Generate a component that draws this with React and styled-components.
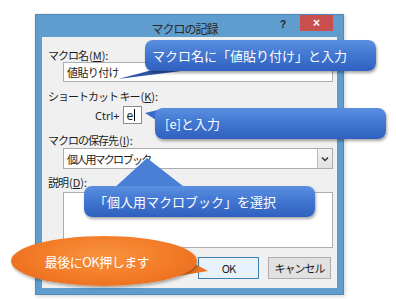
import React from "react";
import styled, { createGlobalStyle } from "styled-components";

const Global = createGlobalStyle`
  html, body { margin: 0; padding: 0; background: #ffffff; }
  body { font-family: "Noto Sans CJK JP", "Noto Sans", sans-serif; }
`;

const Page = styled.div`
  position: relative;
  width: 396px;
  height: 299px;
  box-sizing: border-box;
  padding: 14px 0 0 35px;
  overflow: hidden;
`;

const Dialog = styled.div`
  width: 309px;
  height: 281px;
  box-sizing: border-box;
  background: #5e9dcd;
  border: 1px solid #4f8ab8;
  padding: 0 6px 6px 6px;
  display: flex;
  flex-direction: column;
  box-shadow: 1px 1px 4px rgba(0, 0, 0, 0.2);
`;

const TitleBar = styled.div`
  height: 22px;
  margin: 0 -6px;
  padding-right: 10px;
  display: grid;
  grid-template-columns: 1fr auto 1fr;
  align-items: center;
`;

const Title = styled.div`
  grid-column: 2;
  font-size: 12px;
  letter-spacing: -1px;
  color: #2a2a2a;
  line-height: 22px;
  margin-top: 3px;
`;

const Controls = styled.div`
  grid-column: 3;
  justify-self: end;
  align-self: start;
  display: flex;
  align-items: flex-start;
`;

const Help = styled.div`
  font-family: "Liberation Sans", sans-serif;
  font-weight: bold;
  font-size: 10px;
  color: #222;
  margin: 4px 14px 0 0;
`;

const Close = styled.div`
  width: 33px;
  height: 16px;
  background: #c94f4f;
  color: #fff;
  font-family: "Liberation Sans", sans-serif;
  font-weight: bold;
  font-size: 12px;
  line-height: 16px;
  text-align: center;
`;

const Client = styled.div`
  flex: 1;
  background: #f0f0f0;
  padding: 11px 4px 0 6px;
  display: flex;
  flex-direction: column;
`;

const Label = styled.div`
  font-size: 11px;
  line-height: 14px;
  letter-spacing: -1px;
  color: #1c1c1c;
  margin-top: ${(p) => p.$mt || 0}px;
`;

const Acc = styled.span`
  letter-spacing: 0;
  margin-left: 1px;
  u { text-decoration: underline; }
`;

const Field = styled.div`
  margin: ${(p) => p.$mt || 0}px 0 0 15px;
  height: ${(p) => p.$h || 20}px;
  box-sizing: border-box;
  border: 1px solid #abadb3;
  background: #fff;
  display: flex;
  align-items: ${(p) => (p.$top ? "flex-start" : "center")};
  padding-left: 3px;
  font-size: 11px;
  letter-spacing: ${(p) => (p.$tight ? -1.8 : -0.6)}px;
  color: #1c1c1c;
`;

const FieldText = styled.span`
  flex: 1;
`;

const DropButton = styled.div`
  width: 15px;
  height: 19px;
  box-sizing: border-box;
  border-left: 1px solid #b8b8b8;
  background: linear-gradient(#f2f2f2, #e2e2e2);
  display: flex;
  align-items: center;
  justify-content: center;
`;

const CtrlRow = styled.div`
  margin-top: 3px;
  padding-left: 47px;
  display: flex;
  align-items: center;
  font-family: "Noto Sans", sans-serif;
  font-size: 11px;
  color: #1c1c1c;
`;

const KeyBox = styled.div`
  width: 19px;
  height: 18px;
  box-sizing: border-box;
  margin-left: 3px;
  border: 1px solid #8a8a8a;
  background: #fff;
  display: flex;
  align-items: center;
  padding-left: 3px;
  font-size: 12px;
`;

const Caret = styled.span`
  display: inline-block;
  width: 1px;
  height: 12px;
  background: #000;
  margin-left: 1px;
`;

const ButtonRow = styled.div`
  margin-top: 9px;
  padding-right: 2px;
  display: flex;
  justify-content: flex-end;
  gap: 9px;
`;

const Button = styled.div`
  width: ${(p) => p.$w}px;
  height: 22px;
  box-sizing: border-box;
  border: 1px solid ${(p) => (p.$primary ? "#3c7fb1" : "#adadad")};
  background: ${(p) => (p.$primary ? "#e5f1fb" : "#e1e1e1")};
  display: flex;
  align-items: center;
  justify-content: center;
  font-size: 11px;
  letter-spacing: -1px;
  color: #1c1c1c;
`;

const Tails = styled.svg`
  position: absolute;
  left: 0;
  top: 0;
  width: 396px;
  height: 299px;
  pointer-events: none;
`;

const Bubble = styled.div`
  position: absolute;
  left: ${(p) => p.$x}px;
  top: ${(p) => p.$y}px;
  width: ${(p) => p.$w}px;
  height: ${(p) => p.$h}px;
  box-sizing: border-box;
  padding-left: ${(p) => p.$pl}px;
  border-radius: 8px;
  background: linear-gradient(#5a8fe0 0%, #4378d2 45%, #2f60c0 100%);
  box-shadow: 1px 2px 3px rgba(0, 0, 0, 0.35);
  display: flex;
  align-items: center;
  color: #fff;
  font-size: 13px;
  white-space: nowrap;
`;

const Ellipse = styled.div`
  position: absolute;
  left: 11px;
  top: 236px;
  width: 186px;
  height: 50px;
  border-radius: 50%;
  background: radial-gradient(ellipse at 50% 40%, #f8923f 0%, #f27a26 55%, #e2661a 100%);
  box-shadow: 1px 2px 3px rgba(0, 0, 0, 0.3);
  display: flex;
  align-items: center;
  justify-content: center;
  padding-right: 14px;
  box-sizing: border-box;
  color: #fff;
  font-size: 13px;
  letter-spacing: -0.5px;
  white-space: nowrap;
`;

export default function App() {
  return (
    <>
      <Global />
      <Page>
        <Dialog>
          <TitleBar>
            <Title>マクロの記録</Title>
            <Controls>
              <Help>?</Help>
              <Close>×</Close>
            </Controls>
          </TitleBar>
          <Client>
            <Label>
              マクロ名<Acc>(<u>M</u>):</Acc>
            </Label>
            <Field $mt={0}>
              <FieldText>値貼り付け</FieldText>
            </Field>
            <Label $mt={7}>
              ショートカット キー<Acc>(<u>K</u>):</Acc>
            </Label>
            <CtrlRow>
              Ctrl+
              <KeyBox>
                e<Caret />
              </KeyBox>
            </CtrlRow>
            <Label $mt={9}>
              マクロの保存先<Acc>(<u>I</u>):</Acc>
            </Label>
            <Field $mt={1} $h={21} $tight>
              <FieldText>個人用マクロ ブック</FieldText>
              <DropButton>
                <svg width="8" height="6" viewBox="0 0 8 6">
                  <path d="M1 1.5 L4 4.5 L7 1.5" stroke="#333" strokeWidth="1.5" fill="none" />
                </svg>
              </DropButton>
            </Field>
            <Label $mt={6}>
              説明<Acc>(<u>D</u>):</Acc>
            </Label>
            <Field $mt={3} $h={56} $top />
            <ButtonRow>
              <Button $w={61} $primary>OK</Button>
              <Button $w={63}>キャンセル</Button>
            </ButtonRow>
          </Client>
        </Dialog>

        <Tails viewBox="0 0 396 299">
          <polygon points="160,68 205,68 118,79" fill="#2d56a8" />
          <polygon points="162,109 145,113 164,125" fill="#3a6dcb" />
          <polygon points="147,158 112,190 188,190" fill="#4a7fd6" />
          <polygon points="182,257 208,271 178,276" fill="#ec7424" />
        </Tails>

        <Bubble $x={145} $y={40} $w={231} $h={31} $pl={7}>
          マクロ名に「値貼り付け」と入力
        </Bubble>
        <Bubble $x={155} $y={108} $w={231} $h={31} $pl={10}>
          [e]と入力
        </Bubble>
        <Bubble $x={84} $y={186} $w={231} $h={31} $pl={10}>
          「個人用マクロブック」を選択
        </Bubble>
        <Ellipse>最後にOK押します</Ellipse>
      </Page>
    </>
  );
}
